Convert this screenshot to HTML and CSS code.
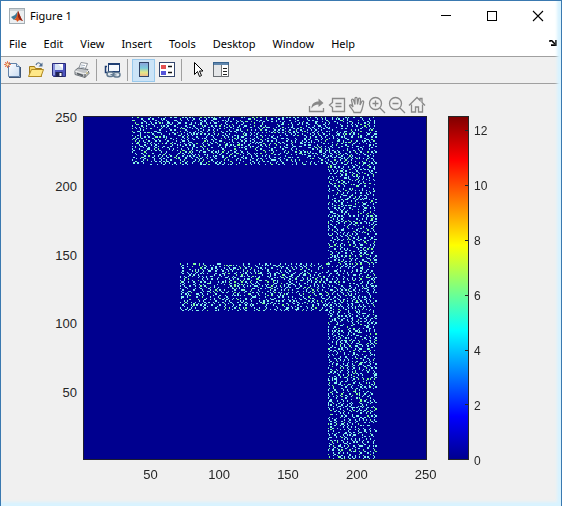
FILE: index.html
```html
<!DOCTYPE html>
<html lang="en">
<head>
<meta charset="utf-8">
<title>Figure 1</title>
<link rel="stylesheet" href="styles.css">
</head>
<body>
<div class="window">
  <header class="titlebar">
    <svg class="app-icon" width="16" height="16" viewBox="0 0 16 16" aria-hidden="true">
      <rect x=".5" y=".5" width="15" height="15" fill="#eceff1" stroke="#a3adb3"/>
      <path d="M1 2h14" stroke="#cfd5d9" stroke-width="2"/>
      <path d="M2 9l4-2 3-4-1 6-3 3z" fill="#3f7896"/>
      <path d="M9 3c1 1 2 6 5 10-3-2-4-1-6 1 0-2-1-2-3-2 3-2 3-6 4-9z" fill="#d9531e"/>
      <path d="M9 3c1 1 2 6 5 10l-3-1-2-3z" fill="#8e2015"/>
    </svg>
    <h1 class="title">Figure 1</h1>
    <button class="win-btn" aria-label="Minimize"><svg width="12" height="12"><path d="M1 5.500h10" stroke="#000"/></svg></button>
    <button class="win-btn" aria-label="Maximize"><svg width="12" height="12"><rect x="1.500" y="1.500" width="9" height="9" fill="none" stroke="#000"/></svg></button>
    <button class="win-btn" aria-label="Close"><svg width="12" height="12"><path d="M1 1l10 10M11 1L1 11" stroke="#000" stroke-width="1.100"/></svg></button>
  </header>

  <nav class="menubar" aria-label="Menu">
    <button>File</button><button>Edit</button><button>View</button><button>Insert</button><button>Tools</button><button>Desktop</button><button>Window</button><button>Help</button>
    <button class="dock" aria-label="Dock figure"><svg width="8" height="6" viewBox="0 0 8 6"><path d="M0 1h2M1 0h1l4 4" stroke="#000" stroke-width="1.600" fill="none"/><path d="M7 0v5.200H2" stroke="#000" stroke-width="1.700" fill="none"/></svg></button>
  </nav>

  <div class="toolbar" role="toolbar" aria-label="Figure tools">
    <button aria-label="New figure"><svg width="18" height="18" viewBox="0 0 18 18"><defs><linearGradient id="pg" x2="1" y2="1"><stop stop-color="#fff"/><stop offset="1" stop-color="#c9dcf2"/></linearGradient></defs><path d="M4.500 2.500h8l3 3v10h-11z" fill="url(#pg)" stroke="#6382a8"/><path d="M5 16.500h11.500V6" fill="none" stroke="#3f5677"/><path d="M12.500 2.500v3h3" fill="#dce9f8" stroke="#6382a8"/><path d="M3.500 0v7M0 3.500h7M1 1l5 5M6 1L1 6" stroke="#ee7b55"/><circle cx="3.500" cy="3.500" r="1.700" fill="#fff3b0" stroke="#d85d3c"/></svg></button>
    <button aria-label="Open file"><svg width="18" height="18" viewBox="0 0 18 18"><path d="M2.500 15.500V5.500h5l1 2h6v8z" fill="#f6d66a" stroke="#a17a1b"/><path d="M1.500 15.500l3-7h12l-2.500 7z" fill="#ffe887" stroke="#b18a24"/><path d="M9 4c1-3 4-3 5 0" fill="none" stroke="#526f91" stroke-width="1.200"/><path d="M15.500 1.500v4h-4z" fill="#526f91"/></svg></button>
    <button aria-label="Save figure"><svg width="18" height="18" viewBox="0 0 18 18"><path d="M2.500 2.500h13v13h-12l-1-1z" fill="#4e55bd" stroke="#292d7d"/><path d="M3 3h2v11H3z" fill="#8b94df"/><rect x="5" y="3" width="8" height="6" fill="#d9e5f5"/><path d="M8 3h5v5z" fill="#fff"/><rect x="5.500" y="11" width="7" height="5" fill="#202351"/><rect x="9.500" y="12" width="2" height="3" fill="#fff"/></svg></button>
    <button aria-label="Print figure"><svg width="18" height="18" viewBox="0 0 18 18"><path d="M5.500 8L8 1.500l6.500 1L12 9z" fill="#fff" stroke="#8f949a"/><path d="M8 4l4 .6M7.500 6l4 .6" stroke="#a8b4c2"/><path d="M2 9.500L5 7l10 1.500 1 4-4 4-10-3z" fill="#c3c6c9" stroke="#6f757b"/><path d="M2 10l10 3 4-4" fill="none" stroke="#f4f4f4"/><path d="M12 13v3.500" stroke="#555"/><path d="M4 12.500l6 2" stroke="#555b61" stroke-width="1.500"/><circle cx="14" cy="12" r=".8" fill="#b6a144"/></svg></button>
    <span class="sep"></span>
    <button aria-label="Link plot"><svg width="18" height="18" viewBox="0 0 18 18"><rect x="4.500" y="2.500" width="11" height="8" fill="#f5f8fc" stroke="#1e3d72"/><path d="M4 3h12" stroke="#1e3d72" stroke-width="2"/><path d="M3 5.500H1.500v6H4" fill="none" stroke="#1e3d72" stroke-width="1.500"/><rect x="3" y="11" width="6.500" height="4.500" rx="2.200" fill="#e2e9ef" stroke="#617990" stroke-width="1.500"/><rect x="9.500" y="11.500" width="6.500" height="4.500" rx="2.200" fill="#e2e9ef" stroke="#617990" stroke-width="1.500"/><path d="M6.500 13.500l6 .5" stroke="#617990" stroke-width="1.200"/></svg></button>
    <span class="sep"></span>
    <button class="on" aria-pressed="true" aria-label="Insert colorbar"><svg width="18" height="18" viewBox="0 0 18 18"><defs><linearGradient id="cb" x2="0" y2="1"><stop stop-color="#8c9fda"/><stop offset=".4" stop-color="#79cbdc"/><stop offset=".7" stop-color="#e2e887"/><stop offset="1" stop-color="#f2b58b"/></linearGradient></defs><rect x="4.500" y="1.500" width="9" height="14" fill="url(#cb)" stroke="#304366"/></svg></button>
    <button aria-label="Insert legend"><svg width="18" height="18" viewBox="0 0 18 18"><rect x="1.500" y="1.500" width="15" height="14" fill="#fff" stroke="#34466c"/><rect x="3" y="4" width="5" height="4" fill="#e35050"/><rect x="3" y="10" width="5" height="4" fill="#5555da"/><path d="M10 5.500h4M10 11.500h4" stroke="#111" stroke-width="1.500"/></svg></button>
    <span class="sep"></span>
    <button aria-label="Edit plot"><svg width="18" height="18" viewBox="0 0 18 18"><path d="M5.500 1.500v12l3-3 2 5 2-1-2-4.500h3.500z" fill="#fff" stroke="#000"/></svg></button>
    <button aria-label="Open property inspector"><svg width="18" height="18" viewBox="0 0 18 18"><rect x="1.500" y="1.500" width="15" height="14" fill="#e4e6e8" stroke="#686d72"/><path d="M1 2.500h16" stroke="#39648f" stroke-width="3"/><path d="M2 3h14" stroke="#87a9cb"/><rect x="9" y="4" width="7" height="11" fill="#fff"/><path d="M9.500 4v12" stroke="#777"/><path d="M11 7.500h4M11 10.500h4M11 13.500h4" stroke="#222"/></svg></button>
  </div>

  <main class="figure">
    <div class="axes-tools" role="toolbar" aria-label="Axes tools">
      <button aria-label="Export"><svg width="18" height="18" viewBox="0 0 18 18"><path d="M1.500 10v5.500h14V12" fill="none"/><path d="M3.500 12.500c0-5 3-7 7-7V2.500l5 4.500-5 4V8.500c-3 0-5 1-7 4z" fill="#888" stroke="none"/></svg></button>
      <button aria-label="Data tips"><svg width="18" height="18" viewBox="0 0 18 18"><path d="M4.500 2.500h12v13h-12v-4L1.500 9l3-2.500zM7.500 7.500h6M7.500 10.500h6" fill="none"/></svg></button>
      <button aria-label="Pan"><svg width="18" height="18" viewBox="0 0 18 18"><path d="M6 16.500c-1-3-4-5-4.500-7 .5-1.500 2-.5 3.500 1.500L3.500 4.500c0-2 2-1.500 2.300 0L7 8.500V2.800c0-2 2-2 2.200 0l.3 5.700 1-5.200c.3-1.800 2.200-1.300 2 .5L12 9l1.800-3.500c1-1.300 2.300-.5 1.800 1-1 4-1 7-3 10z" fill="none"/></svg></button>
      <button aria-label="Zoom in"><svg width="18" height="18" viewBox="0 0 18 18"><circle cx="7.500" cy="7.500" r="6" fill="none"/><path d="M12 12l5 5M4.500 7.500h6M7.500 4.500v6"/></svg></button>
      <button aria-label="Zoom out"><svg width="18" height="18" viewBox="0 0 18 18"><circle cx="7.500" cy="7.500" r="6" fill="none"/><path d="M12 12l5 5M4.500 7.500h6"/></svg></button>
      <button aria-label="Restore view"><svg width="18" height="18" viewBox="0 0 18 18"><path d="M1 9.500l8-8 3 3V2.500h2v4l3 3M3.500 8.500v7.500h4v-5h3v5h4V8.500" fill="none"/></svg></button>
    </div>
    <div class="y-labels"><span>250</span><span>200</span><span>150</span><span>100</span><span>50</span></div>
    <canvas class="plot" id="plot" width="250" height="250" role="img" aria-label="Scattered values on a 250 by 250 grid"></canvas>
    <div class="colorbar"><i></i><i></i><i></i><i></i><i></i><i></i></div>
    <div class="bar-labels"><span>12</span><span>10</span><span>8</span><span>6</span><span>4</span><span>2</span><span>0</span></div>
    <div class="x-labels"><span>50</span><span>100</span><span>150</span><span>200</span><span>250</span></div>
  </main>
</div>
<script src="plot.js"></script>
</body>
</html>
```
FILE: styles.css
```css
* { box-sizing: border-box; }

body {
  margin: 0;
  font-family: "Noto Sans", "Open Sans", sans-serif;
  font-size: 11px;
  color: #000;
}

button {
  padding: 0;
  border: 0;
  background: none;
  font: inherit;
  color: inherit;
}

svg { display: block; }

.window {
  position: relative;
  display: flex;
  flex-direction: column;
  min-height: 100vh;
  border: 1px solid #3a79b0;
  background: #fff;
}

.window::after {
  content: "";
  position: absolute;
  inset: 0;
  box-shadow: inset -4px -4px 3px #d8f3ff;
  pointer-events: none;
}

.titlebar {
  display: flex;
  align-items: center;
  height: 29px;
  padding-left: 8px;
}

.title {
  flex: 1;
  margin: 0 0 0 5px;
  font-size: 11px;
  font-weight: 400;
}

.win-btn {
  display: grid;
  place-items: center;
  width: 46px;
  height: 29px;
}

.menubar {
  display: flex;
  align-items: center;
  gap: 17px;
  height: 26px;
  padding: 0 4px 0 8px;
}

.menubar .dock { margin-left: auto; }

.toolbar {
  display: flex;
  align-items: center;
  height: 28px;
  border-top: 1px solid #a0a0a0;
  border-bottom: 1px solid #a0a0a0;
  background: #f0f0f0;
}

.toolbar button {
  display: grid;
  place-items: center;
  width: 23px;
  height: 23px;
}

.toolbar .on {
  border: 1px solid #99c9ec;
  background: #cce4f7;
}

.sep {
  width: 1px;
  height: 22px;
  margin: 0 4px 0 3px;
  background: #a0a0a0;
}

.figure {
  flex: 1;
  display: grid;
  grid-template-columns: 82px minmax(0, 1fr) 21px 21px 92px;
  grid-template-rows: 32px minmax(0, 1fr) 46px;
  background: #f0f0f0;
  font-family: "Liberation Sans", Arial, sans-serif;
  font-size: 13px;
  line-height: 16px;
  color: #262626;
}

.axes-tools {
  grid-column: 1 / 3;
  display: flex;
  justify-content: flex-end;
  align-items: center;
  gap: 2px;
  padding: 10px 1px 0 0;
}

.axes-tools svg {
  stroke: #888;
  stroke-width: 1.3;
}

.y-labels {
  grid-area: 2 / 1;
  display: flex;
  flex-direction: column;
  margin: -6px 6px 6px 0;
  text-align: right;
}

.y-labels span { flex: 1; }

.plot {
  grid-area: 2 / 2;
  contain: size;
  width: 100%;
  height: 100%;
  border: 1px solid #1c1c30;
  image-rendering: pixelated;
}

.colorbar {
  grid-area: 2 / 4;
  display: flex;
  flex-direction: column;
  border: 1px solid #262626;
  background: linear-gradient(#800000, #f00 12.5%, #ff0 37.5%, #0ff 62.5%, #00f 87.5%, #00008f);
}

.colorbar::before {
  content: "";
  flex: 1;
}

.colorbar i {
  flex: 4;
  width: 3px;
  margin-left: auto;
  border-top: 1px solid #262626;
}

.bar-labels {
  grid-area: 2 / 5;
  display: flex;
  flex-direction: column;
  margin: -7px 0 7px 5px;
  font-size: 12px;
}

.bar-labels::before {
  content: "";
  flex: 1;
}

.bar-labels span {
  flex: 4;
  min-height: 0;
}

.bar-labels span:last-child {
  flex: none;
  height: 0;
}

.x-labels {
  grid-area: 3 / 2;
  display: flex;
  margin: 7px -33px 0 33px;
  text-align: center;
}

.x-labels span { flex: 1; }
```
FILE: plot.js
```js
const SIZE = 250;
const ctx = document.getElementById("plot").getContext("2d");
ctx.fillStyle = "#00008f";
ctx.fillRect(0, 0, SIZE, SIZE);

// Seeded generator, so the scatter is the same on every load.
let seed = 90210;
function random() {
  seed = (seed + 0x6d2b79f5) | 0;
  let t = Math.imul(seed ^ (seed >>> 15), 1 | seed);
  t = (t + Math.imul(t ^ (t >>> 7), 61 | t)) ^ t;
  return ((t ^ (t >>> 14)) >>> 0) / 4294967296;
}

function inShape(x, y) {
  const top = x >= 35 && x < 214 && y < 35;
  const stem = x >= 178 && x < 214;
  const arm = x >= 70 && x < 178 && y >= 107 && y < 142;
  return top || stem || arm;
}

// Points keep apart: a filled neighbour makes a cell much less likely.
const filled = new Uint8Array(SIZE * SIZE);
for (let y = 0; y < SIZE; y++) {
  for (let x = 0; x < SIZE; x++) {
    if (!inShape(x, y)) continue;
    const i = y * SIZE + x;
    const crowded = filled[i - 1] || filled[i - 2] || filled[i - SIZE];
    if (random() < (crowded ? 0.08 : 0.38)) {
      filled[i] = 1;
      ctx.fillStyle = random() < 0.15 ? "#80ff90" : "#88f4ec";
      ctx.fillRect(x, y, 1, 1);
    }
  }
}
```
